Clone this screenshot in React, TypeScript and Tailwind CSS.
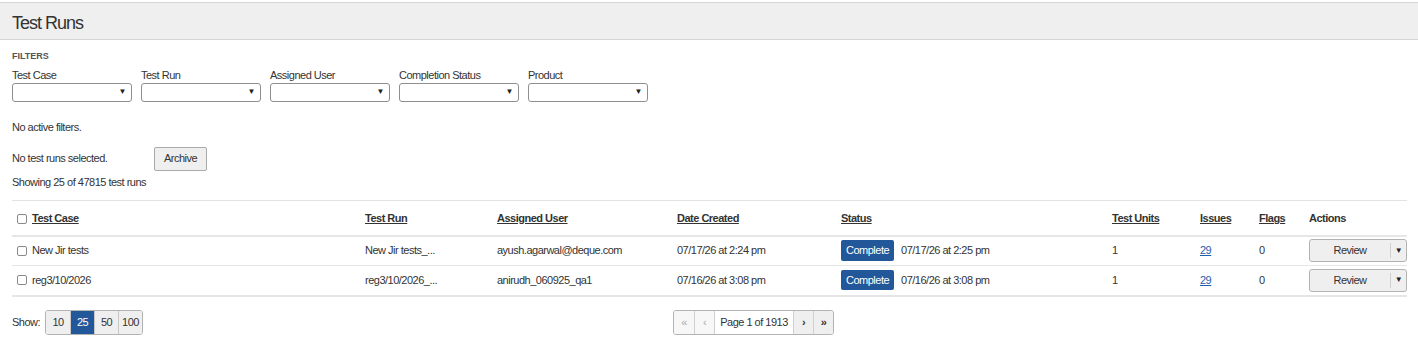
const filters = ['Test Case', 'Test Run', 'Assigned User', 'Completion Status', 'Product'];

const cols = 'grid grid-cols-[353px_132px_180px_164px_271px_88px_59px_50px_98px]';

const rows = [
  { name: 'New Jir tests', run: 'New Jir tests_...', user: 'ayush.agarwal@deque.com', created: '07/17/26 at 2:24 pm', done: '07/17/26 at 2:25 pm' },
  { name: 'reg3/10/2026', run: 'reg3/10/2026_...', user: 'anirudh_060925_qa1', created: '07/16/26 at 3:08 pm', done: '07/16/26 at 3:08 pm' },
];

const Box = () => (
  <span className="inline-block h-[10px] w-[10px] rounded-[2px] border border-[#8a8a8a] bg-white" />
);

const Caret = () => <span className="text-[8px] leading-none text-[#222]">▼</span>;

export default function App() {
  return (
    <div className="min-h-[344px] w-[1418px] bg-white pt-[2px] font-['Liberation_Sans',Arial,sans-serif] text-[11px] tracking-[-0.5px] text-[#333]">
      {/* header */}
      <div className="flex h-[38px] items-center border-y border-[#d6d6d6] bg-[#efefef] pl-3 pt-[4px]">
        <h1 className="text-[18px] tracking-[-1px] text-[#333]">Test Runs</h1>
      </div>

      <div className="px-3">
        {/* filters */}
        <div className="mt-[10px] text-[9px] font-bold tracking-[0px] text-[#555]">FILTERS</div>
        <div className="mt-[4px] flex gap-[9px]">
          {filters.map((f) => (
            <div key={f} className="w-[120px]">
              <div className="h-[14px] leading-[14px]">{f}</div>
              <div className="mt-[1px] flex h-[19px] items-center justify-end rounded-[3px] border border-[#8f8f8f] bg-white pr-[5px]">
                <Caret />
              </div>
            </div>
          ))}
        </div>

        <p className="mt-[18px] h-[14px] leading-[14px]">No active filters.</p>

        <div className="mt-[13px] flex items-center">
          <span className="w-[142px]">No test runs selected.</span>
          <button className="h-[24px] w-[53px] rounded-[2px] border border-[#a9a9a9] bg-[#efefef] text-[11px] text-[#333]">
            Archive
          </button>
        </div>
        <p className="mt-[4px] h-[14px] leading-[14px]">Showing 25 of 47815 test runs</p>

        {/* table */}
        <div className="mt-[11px] w-[1395px]">
          <div className={`${cols} h-[35px] items-center border-t border-[#e3e3e3] pt-[2px] font-bold`}>
            <div className="flex items-center gap-[5px] pl-[5px]">
              <Box />
              <span className="underline">Test Case</span>
            </div>
            <span className="underline">Test Run</span>
            <span className="underline">Assigned User</span>
            <span className="underline">Date Created</span>
            <span className="underline">Status</span>
            <span className="underline">Test Units</span>
            <span className="underline">Issues</span>
            <span className="underline">Flags</span>
            <span>Actions</span>
          </div>
          {rows.map((r, i) => (
            <div
              key={r.name}
              className={`${cols} h-[30px] items-center ${i === 0 ? 'border-t-2 border-[#e6e6e6]' : 'border-t border-[#e6e6e6]'}`}
            >
              <div className="flex items-center gap-[5px] pl-[5px]">
                <Box />
                <span>{r.name}</span>
              </div>
              <span>{r.run}</span>
              <span>{r.user}</span>
              <span>{r.created}</span>
              <div className="flex items-center gap-[7px]">
                <span className="rounded-[2px] bg-[#22589a] px-[5px] py-[2px] text-white">Complete</span>
                <span>{r.done}</span>
              </div>
              <span>1</span>
              <span className="text-[#1f5ea8] underline">29</span>
              <span>0</span>
              <div className="flex h-[23px] w-[98px] rounded-[3px] border border-[#b3b3b3] bg-[#efefef]">
                <span className="flex flex-1 items-center justify-center">Review</span>
                <span className="my-[3px] w-px bg-[#cfcfcf]" />
                <span className="flex w-[15px] items-center justify-center">
                  <Caret />
                </span>
              </div>
            </div>
          ))}
          <div className="border-t-2 border-[#e6e6e6]" />
        </div>

        {/* footer */}
        <div className="mt-[13px] flex items-center">
          <span className="w-[33px]">Show:</span>
          <div className="flex h-[25px] overflow-hidden rounded-[3px] border border-[#b3b3b3]">
            {['10', '25', '50', '100'].map((n) => (
              <span
                key={n}
                className={`flex w-[24px] items-center justify-center border-l border-[#c8c8c8] first:border-l-0 ${n === '25' ? 'bg-[#22589a] text-white' : 'bg-[#efefef]'}`}
              >
                {n}
              </span>
            ))}
          </div>
          <div className="ml-[530px] flex h-[25px] overflow-hidden rounded-[3px] border border-[#b3b3b3]">
            <span className="flex w-[20px] items-center justify-center bg-[#f7f7f7] text-[#aaa]">«</span>
            <span className="flex w-[20px] items-center justify-center border-l border-[#d0d0d0] bg-[#f7f7f7] text-[#aaa]">‹</span>
            <span className="flex w-[79px] items-center justify-center border-l border-[#d0d0d0] bg-white">Page 1 of 1913</span>
            <span className="flex w-[20px] items-center justify-center border-l border-[#d0d0d0] bg-[#efefef] font-bold">›</span>
            <span className="flex w-[20px] items-center justify-center border-l border-[#d0d0d0] bg-[#efefef] font-bold">»</span>
          </div>
        </div>
      </div>
    </div>
  );
}
